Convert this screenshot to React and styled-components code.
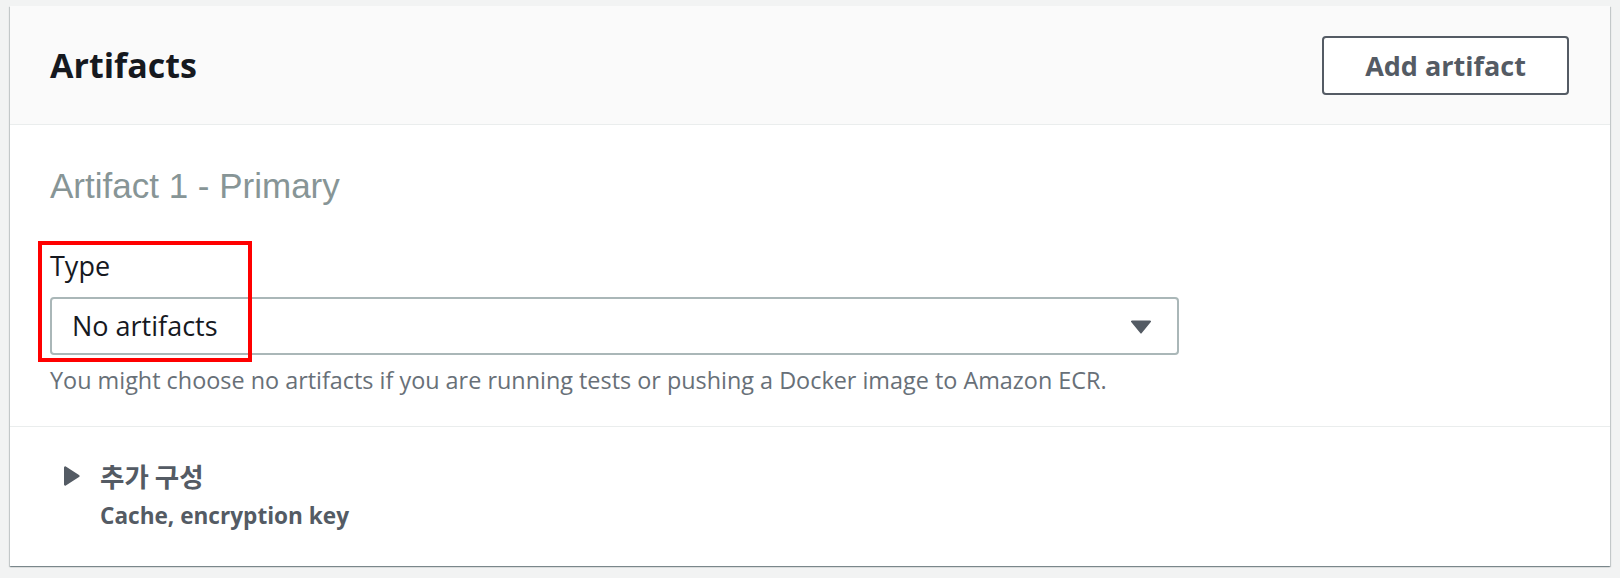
import React from "react";
import styled, { createGlobalStyle } from "styled-components";

const Global = createGlobalStyle`
  html, body { margin: 0; padding: 0; background: #f2f3f3; }
  body { font-family: "Open Sans", "Noto Sans", sans-serif; }
  * { box-sizing: border-box; }
`;

const Page = styled.div`
  padding: 6px 10px 13px 10px;
`;

const Card = styled.section`
  width: 1600px;
  background: #ffffff;
  box-shadow: 0 1px 1px 0 rgba(0, 28, 36, 0.3), 1px 1px 1px 0 rgba(0, 28, 36, 0.15),
    -1px 1px 1px 0 rgba(0, 28, 36, 0.15);
`;

const Header = styled.header`
  height: 119px;
  background: #fafafa;
  border-bottom: 1px solid #eaeded;
  display: flex;
  align-items: center;
  justify-content: space-between;
  padding: 0 41px 0 40px;
`;

const Title = styled.h2`
  margin: 0;
  font-family: "Open Sans", sans-serif;
  font-weight: 700;
  font-size: 34px;
  line-height: 44px;
  color: #16191f;
`;

const OutlineButton = styled.button`
  width: 247px;
  height: 59px;
  border: 2px solid #545b64;
  border-radius: 4px;
  background: #ffffff;
  color: #545b64;
  font-family: "Open Sans", sans-serif;
  font-weight: 700;
  font-size: 27px;
  padding: 0;
  cursor: pointer;
`;

const Body = styled.div`
  padding: 41px 40px 31px 40px;
  border-bottom: 1px solid #eaeded;
  display: flex;
  flex-direction: column;
`;

const SubTitle = styled.h3`
  margin: 0;
  font-family: "Liberation Sans", Arial, sans-serif;
  font-weight: 400;
  font-size: 35px;
  line-height: 40px;
  color: #879596;
`;

const Field = styled.div`
  position: relative;
  margin-top: 42px;
  display: flex;
  flex-direction: column;
  align-items: flex-start;
`;

const Label = styled.label`
  font-size: 27px;
  line-height: 36px;
  color: #16191f;
`;

const Select = styled.div`
  margin-top: 13px;
  width: 1129px;
  height: 58px;
  border: 2px solid #aab7b8;
  border-radius: 4px;
  display: flex;
  align-items: center;
  justify-content: space-between;
  padding: 0 26px 0 20px;
  font-size: 27px;
  color: #16191f;
`;

const SelectText = styled.span`
  line-height: 52px;
`;

const Caret = styled.svg`
  width: 20px;
  height: 15px;
  display: block;
`;

const Highlight = styled.div`
  position: absolute;
  left: -12px;
  top: -7px;
  width: 214px;
  height: 121px;
  border: 4px solid #ff0000;
  pointer-events: none;
`;

const Help = styled.p`
  margin: 10px 0 0 0;
  font-size: 23.4px;
  line-height: 30px;
  color: #687078;
`;

const Expander = styled.div`
  padding: 32px 40px 35px 53px;
  display: flex;
  flex-direction: column;
`;

const ExpanderRow = styled.div`
  display: flex;
  align-items: center;
  gap: 20px;
`;

const Arrow = styled.svg`
  width: 17px;
  height: 20px;
  display: block;
`;

const ExpanderTitle = styled.span`
  font-family: "Noto Sans CJK KR", "Open Sans", sans-serif;
  font-weight: 700;
  font-size: 26.5px;
  line-height: 34px;
  color: #545b64;
`;

const ExpanderDesc = styled.span`
  margin-top: 8px;
  margin-left: 37px;
  font-weight: 700;
  font-size: 22.6px;
  line-height: 30px;
  color: #545b64;
`;

export default function App() {
  return (
    <>
      <Global />
      <Page>
        <Card>
          <Header>
            <Title>Artifacts</Title>
            <OutlineButton>Add artifact</OutlineButton>
          </Header>
          <Body>
            <SubTitle>Artifact 1 - Primary</SubTitle>
            <Field>
              <Highlight />
              <Label>Type</Label>
              <Select>
                <SelectText>No artifacts</SelectText>
                <Caret viewBox="0 0 20 15">
                  <path d="M1 1.5 H19 a1 1 0 0 1 0.8 1.6 L10.8 14 a1 1 0 0 1 -1.6 0 L0.2 3.1 A1 1 0 0 1 1 1.5 Z" fill="#545b64" />
                </Caret>
              </Select>
              <Help>You might choose no artifacts if you are running tests or pushing a Docker image to Amazon ECR.</Help>
            </Field>
          </Body>
          <Expander>
            <ExpanderRow>
              <Arrow viewBox="0 0 17 20">
                <path d="M1 1.5 a1.2 1.2 0 0 1 1.8 -1 L16 8.9 a1.3 1.3 0 0 1 0 2.2 L2.8 19.5 a1.2 1.2 0 0 1 -1.8 -1 Z" fill="#545b64" />
              </Arrow>
              <ExpanderTitle>추가 구성</ExpanderTitle>
            </ExpanderRow>
            <ExpanderDesc>Cache, encryption key</ExpanderDesc>
          </Expander>
        </Card>
      </Page>
    </>
  );
}
